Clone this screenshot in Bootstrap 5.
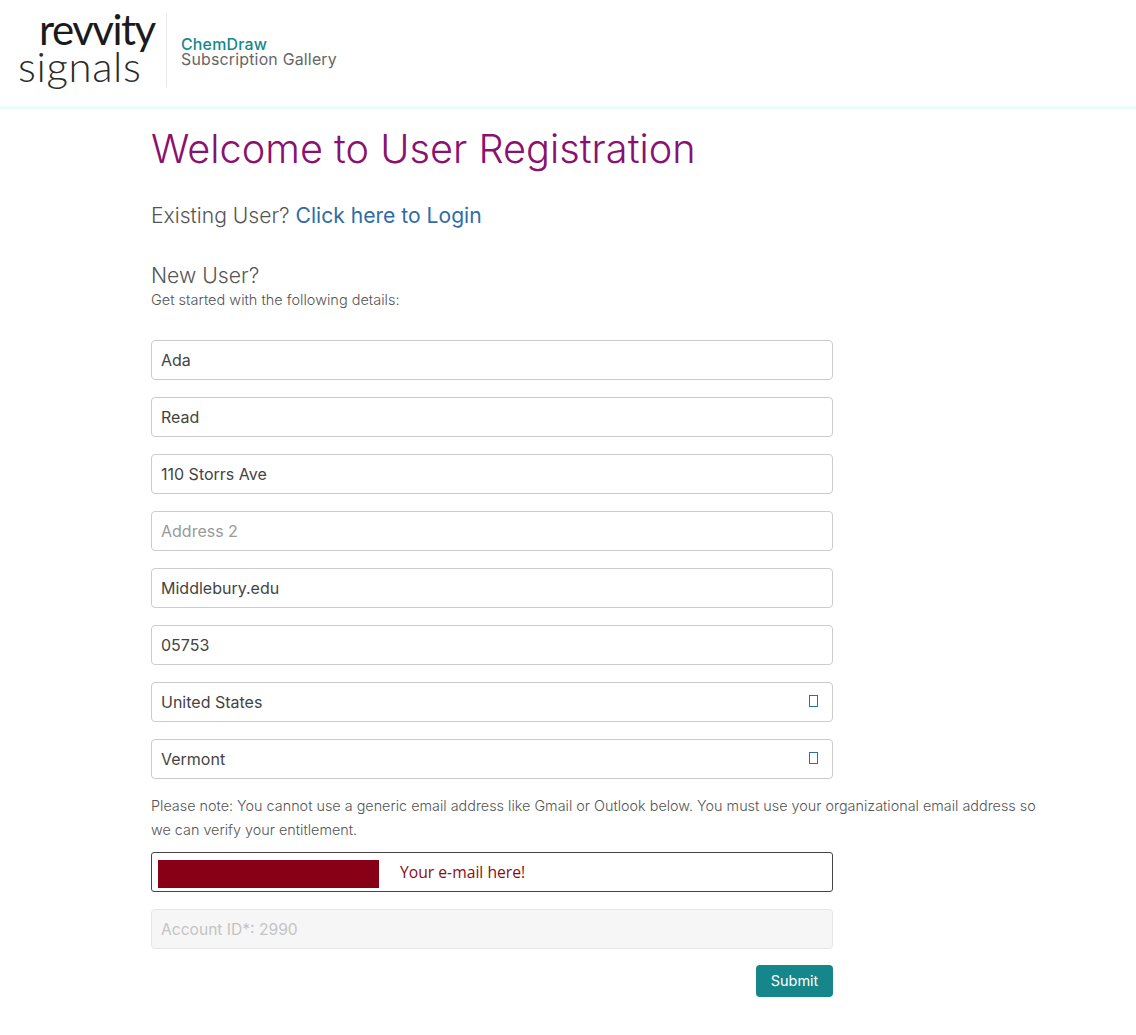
<!DOCTYPE html>
<html lang="en">
<head>
<meta charset="utf-8">
<title>User Registration</title>
<link href="https://cdn.jsdelivr.net/npm/bootstrap@5.3.0/dist/css/bootstrap.min.css" rel="stylesheet">
<style>
body{font-family:Inter,"Noto Sans",sans-serif;color:#4a4a4a;background:#fff}
.site-head{height:109px;border-bottom:3px solid #e8fcfc;padding-left:18px}
.logo-box{width:149px;height:74px;margin-top:13px;border-right:1px solid #e9e9e9}
.logo-top{font-family:Lato,sans-serif;font-weight:400;font-size:42px;line-height:32px;color:#1b1b1b;padding-left:21px;letter-spacing:-1.5px;height:32px}
.logo-bottom{font-family:Lato,sans-serif;font-weight:300;font-size:42px;line-height:42px;color:#2a2a2a;letter-spacing:.6px}
.prod{margin-left:14px;margin-top:37px;font-size:15.9px;line-height:15px;letter-spacing:.2px}
.prod-a{color:#15888a;font-weight:500}
.prod-b{color:#666}
.page-wrap{padding-left:151px;width:1045px}
.main-title{font-size:39.7px;font-weight:300;color:#8a1170;line-height:50px;margin:15px 0 0}
.exist{font-size:21.1px;line-height:30px;margin-top:27px;color:#555;font-weight:300}
.exist a{color:#2f6ca8;text-decoration:none;font-weight:400}
.new-u{font-size:21.2px;line-height:26px;margin:0;margin-top:31px;font-weight:300;color:#555}
.new-s{font-size:14.5px;line-height:18px;color:#555;margin-top:3px;margin-bottom:31px;font-weight:300}
.fields{width:682px}
.fields .form-control,.fake-sel{height:40px;border:1px solid #ccc;border-radius:4px;font-size:16px;padding:0 10px 0 9px;color:#444;margin-bottom:17px}
.fields .form-control::placeholder{color:#999}
.fake-sel{display:flex;align-items:center;justify-content:space-between;padding:0 14px 0 9px}
.tofu{width:9px;height:12px;border:1px solid #2a6fb5;display:block;margin-top:-2px}
.note{font-size:14.38px;line-height:24px;color:#555;margin:-2px 0 10px;font-weight:300}
.mail-box{width:682px;height:40px;border:1px solid #444;border-radius:3px;padding:7px 6px 3px;display:flex;align-items:center;margin-bottom:17px;background:#fff}
.redact{width:221px;height:28px;background:#870016}
.mail-hint{font-family:"Open Sans",sans-serif;color:#8b0b14;font-size:15.7px;margin-left:21px;margin-bottom:2px}
.fields .form-control.acct{background:#f6f6f6;border-color:#e6e6e6;margin-bottom:16px;font-size:15.6px}
.fields .form-control.acct::placeholder{color:#c4c4c4}
.btn-send{background:#15868a;border:0;color:#fff;font-size:14.5px;width:77px;height:32px;padding:0;border-radius:4px}
.btn-send:hover{background:#126f72;color:#fff}
</style>
</head>
<body>
<header class="site-head d-flex">
  <div class="logo-box">
    <div class="logo-top">revvity</div>
    <div class="logo-bottom">signals</div>
  </div>
  <div class="prod"><div class="prod-a">ChemDraw</div><div class="prod-b">Subscription Gallery</div></div>
</header>
<main class="page-wrap">
  <h1 class="main-title">Welcome to User Registration</h1>
  <div class="exist">Existing User? <a href="#">Click here to Login</a></div>
  <h2 class="new-u">New User?</h2>
  <div class="new-s">Get started with the following details:</div>
  <form>
    <div class="fields">
      <input class="form-control" value="Ada">
      <input class="form-control" value="Read">
      <input class="form-control" value="110 Storrs Ave">
      <input class="form-control" placeholder="Address 2">
      <input class="form-control" value="Middlebury.edu">
      <input class="form-control" value="05753">
      <div class="fake-sel">United States<span class="tofu"></span></div>
      <div class="fake-sel">Vermont<span class="tofu"></span></div>
    </div>
    <p class="note">Please note: You cannot use a generic email address like Gmail or Outlook below. You must use your organizational email address so we can verify your entitlement.</p>
    <div class="mail-box"><span class="redact"></span><span class="mail-hint">Your e-mail here!</span></div>
    <div class="fields">
      <input class="form-control acct" placeholder="Account ID*: 2990" disabled>
      <div class="d-flex justify-content-end"><button type="button" class="btn btn-send">Submit</button></div>
    </div>
  </form>
</main>
<script src="https://cdn.jsdelivr.net/npm/bootstrap@5.3.0/dist/js/bootstrap.bundle.min.js"></script>
</body>
</html>
